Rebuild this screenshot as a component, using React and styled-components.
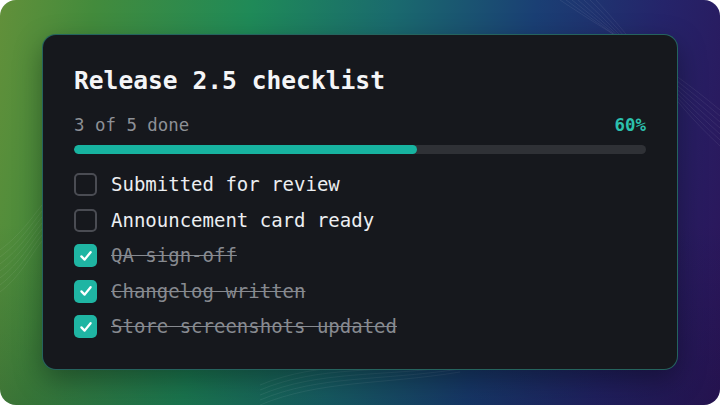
import React from "react";
import styled, { createGlobalStyle } from "styled-components";

const GlobalStyle = createGlobalStyle`
  html, body {
    margin: 0;
    padding: 0;
    background: #ffffff;
  }
  * {
    box-sizing: border-box;
  }
`;

const items = [
  { label: "Submitted for review", done: false },
  { label: "Announcement card ready", done: false },
  { label: "QA sign-off", done: true },
  { label: "Changelog written", done: true },
  { label: "Store screenshots updated", done: true },
];

const App = () => {
  const done = items.filter((i) => i.done).length;
  const pct = Math.round((done / items.length) * 100);
  return (
    <>
      <GlobalStyle />
      <Stage>
        <Waves viewBox="0 0 720 405" preserveAspectRatio="none">
          {[0, 1, 2, 3, 4, 5, 6].map((n) => (
            <path
              key={"a" + n}
              d={`M${560 + n * 6} 0 C ${620 + n * 6} ${40 + n * 4}, ${660} ${60 + n * 5}, 720 ${110 + n * 6}`}
            />
          ))}
          {[0, 1, 2, 3, 4, 5, 6].map((n) => (
            <path
              key={"b" + n}
              d={`M0 ${250 + n * 7} C 20 ${235 + n * 7}, 30 ${220 + n * 6}, 42 ${205 + n * 6}`}
            />
          ))}
          {[0, 1, 2, 3, 4].map((n) => (
            <path
              key={"c" + n}
              d={`M${260} ${405 - n * 5} C 320 ${380 - n * 5}, 380 ${385 - n * 4}, 460 ${372 - n * 3}`}
            />
          ))}
        </Waves>
        <Card>
          <Title>Release 2.5 checklist</Title>
          <Meta>
            <Count>
              {done} of {items.length} done
            </Count>
            <Percent>{pct}%</Percent>
          </Meta>
          <Track>
            <Fill style={{ width: `${pct}%` }} />
          </Track>
          <List>
            {items.map((item) => (
              <Row key={item.label}>
                <Box $checked={item.done}>
                  {item.done && (
                    <svg width="16" height="16" viewBox="0 0 16 16">
                      <path
                        d="M3.4 8.4 L6.6 11.6 L12.6 4.2"
                        fill="none"
                        stroke="#ffffff"
                        strokeWidth="2.3"
                        strokeLinecap="round"
                        strokeLinejoin="round"
                      />
                    </svg>
                  )}
                </Box>
                <Label $done={item.done}>{item.label}</Label>
              </Row>
            ))}
          </List>
        </Card>
      </Stage>
    </>
  );
};
export default App;

const mono = `"DejaVu Sans Mono", "Liberation Mono", monospace`;

const Stage = styled.div`
  position: relative;
  width: 720px;
  height: 405px;
  border-radius: 16px;
  overflow: hidden;
  display: flex;
  align-items: center;
  justify-content: center;
  background:
    linear-gradient(180deg, rgba(0, 0, 0, 0) 55%, rgba(0, 10, 30, 0.18) 100%),
    linear-gradient(
      100deg,
      #62903a 0%,
      #438b3c 12%,
      #1f8a58 32%,
      #1a6a6e 50%,
      #1a3f74 68%,
      #25246a 84%,
      #2c1458 100%
    );
`;

const Waves = styled.svg`
  position: absolute;
  inset: 0;
  width: 100%;
  height: 100%;
  fill: none;
  stroke: rgba(255, 255, 255, 0.07);
  stroke-width: 1;
`;

const Card = styled.div`
  position: relative;
  width: 636px;
  height: 336px;
  margin-top: -1px;
  padding: 32px 31px 0 31px;
  background: #16181d;
  border: 1px solid rgba(56, 190, 175, 0.45);
  border-radius: 14px;
  box-shadow: 0 10px 28px rgba(0, 0, 0, 0.35);
  display: flex;
  flex-direction: column;
`;

const Title = styled.h1`
  margin: 0;
  font: 700 24.6px / 28px ${mono};
  color: #f4f5f7;
`;

const Meta = styled.div`
  margin-top: 20px;
  display: flex;
  justify-content: space-between;
  align-items: baseline;
  height: 21px;
`;

const Count = styled.span`
  font: 400 17.4px / 21px ${mono};
  color: #8d9096;
`;

const Percent = styled.span`
  font: 700 17.4px / 21px ${mono};
  color: #2cc0ad;
`;

const Track = styled.div`
  margin-top: 9px;
  height: 9px;
  border-radius: 5px;
  background: #2f3136;
  overflow: hidden;
`;

const Fill = styled.div`
  height: 100%;
  border-radius: 5px;
  background: #17b3a0;
`;

const List = styled.ul`
  list-style: none;
  margin: 19px 0 0;
  padding: 0;
  display: flex;
  flex-direction: column;
  gap: 12.5px;
`;

const Row = styled.li`
  display: flex;
  align-items: center;
  gap: 14px;
  height: 23px;
`;

const Box = styled.span`
  flex: none;
  width: 23px;
  height: 23px;
  border-radius: 5px;
  display: flex;
  align-items: center;
  justify-content: center;
  background: ${(p) => (p.$checked ? "#1fb5a3" : "transparent")};
  border: ${(p) => (p.$checked ? "none" : "2px solid #4a4c53")};
`;

const Label = styled.span`
  font: 400 19px / 23px ${mono};
  color: ${(p) => (p.$done ? "#878a90" : "#eceef1")};
  text-decoration: ${(p) => (p.$done ? "line-through" : "none")};
  text-decoration-color: #878a90;
`;
